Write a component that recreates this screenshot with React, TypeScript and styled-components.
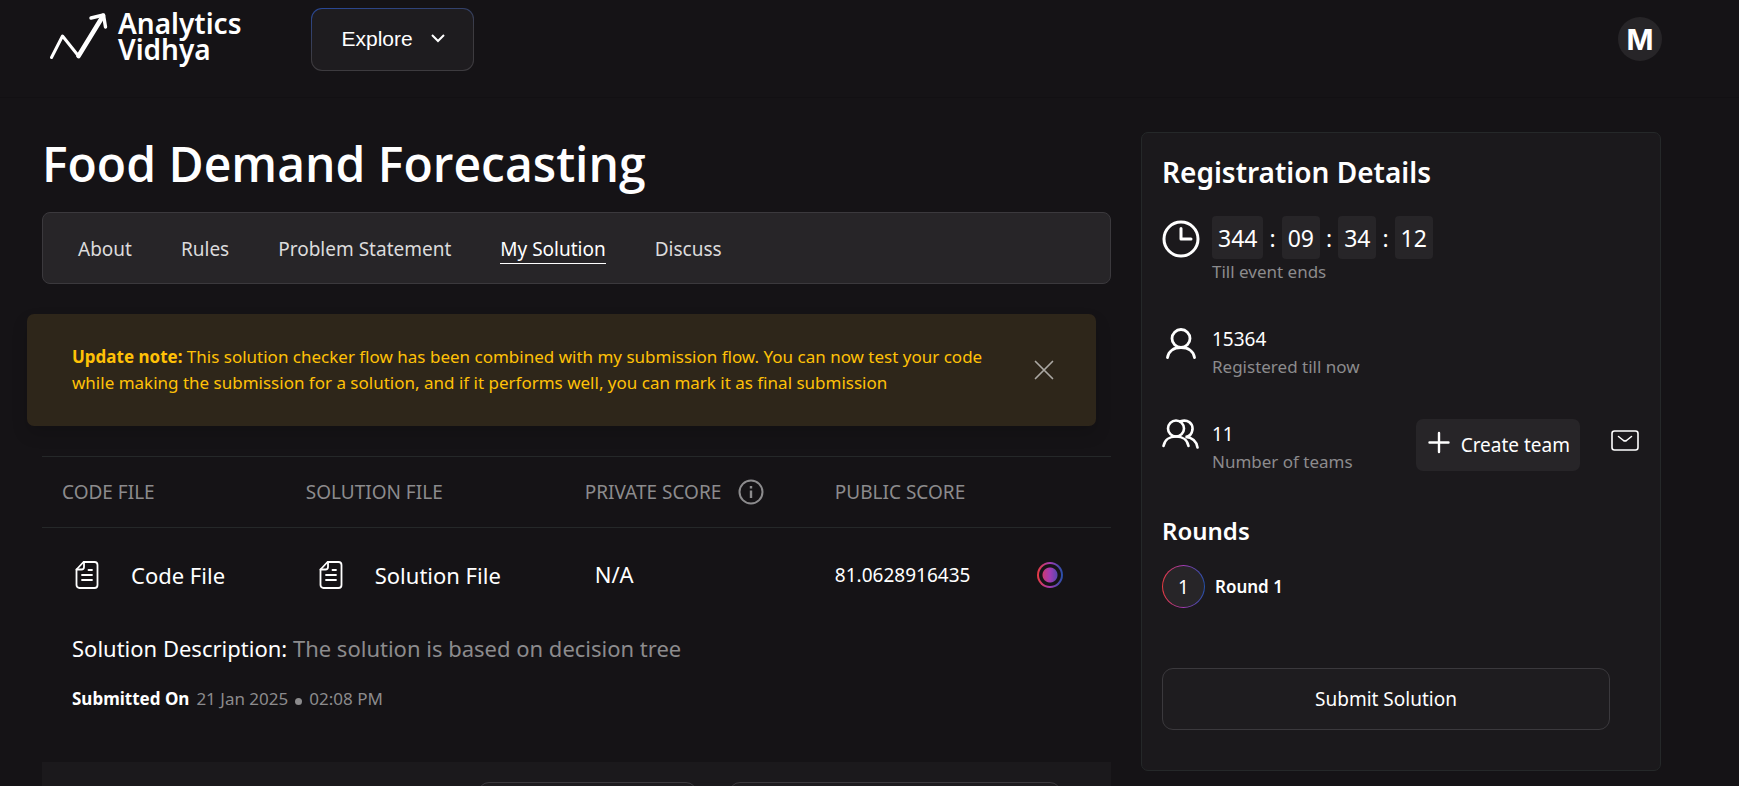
import React from "react";
import styled, { createGlobalStyle, css } from "styled-components";

const GlobalStyle = createGlobalStyle`
  *, *::before, *::after { box-sizing: border-box; }
  html { background: #151316; }
  body {
    margin: 0;
    background: #151316;
    color: #fff;
    font-family: "Noto Sans", "Open Sans", sans-serif;
    font-size: 18px;
    line-height: 26px;
  }
  h1, h2, h3, p { margin: 0; }
  button { font: inherit; color: inherit; cursor: pointer; }
  a { color: inherit; text-decoration: none; }
  svg { display: block; flex: none; }
`;

const muted = "#8c8b8d";
const panel = "#1b191c";
const raised = "#272528";
const hairline = "#252829";

const Page = styled.div`
  height: 100vh;
  overflow: hidden;
`;

const Header = styled.header`
  display: flex;
  align-items: flex-start;
  padding: 8px 77px 26px 50px;
  border-bottom: 1px solid #121013;
`;

const Logo = styled.a`
  display: flex;
  align-items: flex-start;
  gap: 9px;
  margin: 2px 70px 0 0;
`;

const LogoText = styled.span`
  font-size: 28px;
  font-weight: 600;
  line-height: 26px;
`;

const LogoLine = styled.span`
  display: block;
`;

const ExploreButton = styled.button`
  display: flex;
  align-items: center;
  gap: 18px;
  height: 63px;
  padding: 0 28px 2px 29px;
  border: 1px solid transparent;
  border-radius: 11px;
  background:
    linear-gradient(#1e1c1f, #1e1c1f) padding-box,
    linear-gradient(170deg, #28489a, #3d3b3f 55%) border-box;
  font-family: "Liberation Sans", Arial, sans-serif;
  font-size: 21px;
`;

const Avatar = styled.button`
  width: 44px;
  height: 44px;
  margin: 9px 0 0 auto;
  padding: 2px 0 0;
  border: 0;
  border-radius: 50%;
  background: ${raised};
  font-family: Inter, "Liberation Sans", sans-serif;
  font-size: 29px;
  font-weight: 700;
`;

const Main = styled.main`
  display: flex;
  align-items: flex-start;
  gap: 30px;
  padding: 34px 78px 0 42px;
`;

const Content = styled.div`
  flex: 1;
  min-width: 0;
`;

const Title = styled.h1`
  margin-bottom: 16px;
  font-family: "Open Sans", "Noto Sans", sans-serif;
  font-size: 48px;
  font-weight: 600;
  line-height: 64px;
`;

const Tabs = styled.nav`
  display: flex;
  align-items: center;
  gap: 49px;
  height: 72px;
  margin-bottom: 30px;
  padding: 2px 35px 0;
  border: 1px solid #3b393d;
  border-radius: 8px;
  background: ${raised};
`;

const Tab = styled.a<{ $active?: boolean }>`
  border-bottom: 1px solid ${(p) => (p.$active ? "#fff" : "transparent")};
  color: ${(p) => (p.$active ? "#fff" : "#dcdbdc")};
  font-size: 19px;
  line-height: 28px;
`;

const Notice = styled.aside`
  display: flex;
  align-items: center;
  justify-content: space-between;
  gap: 30px;
  height: 112px;
  margin: 0 15px 30px -15px;
  padding: 0 42px 0 45px;
  border-radius: 7px;
  background: #2e261a;
  box-shadow: 0 8px 16px rgba(0, 0, 0, 0.15);
  color: #ffc107;
  font-size: 17px;
`;

const CloseButton = styled.button`
  padding: 0;
  border: 0;
  background: none;
  color: #aba8a3;
`;

const Table = styled.table`
  width: 100%;
  border-collapse: separate;
  border-spacing: 0;
  table-layout: fixed;
`;

const HeadCell = styled.th<{ $width: string }>`
  width: ${(p) => p.$width};
  height: 72px;
  padding: 0 0 0 20px;
  border: solid ${hairline};
  border-width: 1px 0;
  color: ${muted};
  font-weight: 400;
  font-size: 19px;
  text-align: left;
  white-space: nowrap;
`;

const HeadLabel = styled.span`
  display: flex;
  align-items: center;
  gap: 17px;
`;

const Cell = styled.td<{ $indent: number }>`
  height: 94px;
  padding: 0 0 0 ${(p) => p.$indent}px;
  font-size: 19px;
  white-space: nowrap;
`;

const FileLink = styled.a`
  display: flex;
  align-items: center;
  gap: 32px;
  font-size: 22px;
`;

const LargeText = styled.span`
  font-size: 22px;
`;

const FinalRadio = styled.input`
  display: block;
  appearance: none;
  width: 26px;
  height: 26px;
  margin: 0;
  border: 2px solid transparent;
  border-radius: 50%;
  background:
    radial-gradient(circle, transparent 7px, #151316 8px) padding-box,
    linear-gradient(90deg, #e83a3f, #a23bb4 50%, #2350a8) border-box;
`;

const DetailCell = styled.td`
  padding: 10px 0 50px 30px;
`;

const Description = styled.p`
  margin-bottom: 22px;
  font-size: 22px;
  line-height: 32px;
`;

const Submitted = styled.p`
  display: flex;
  align-items: center;
  gap: 7px;
  font-size: 17px;
`;

const Muted = styled.span`
  color: ${muted};
`;

const Dot = styled.span`
  width: 7px;
  height: 7px;
  margin-top: 4px;
  border-radius: 50%;
  background: ${muted};
`;

const FooterBar = styled.div`
  display: flex;
  justify-content: flex-end;
  gap: 32px;
  padding: 20px 50px;
  background: ${panel};
`;

const outlined = css`
  border: 1px solid #3b393d;
  border-radius: 11px;
  background: #1e1c1f;
`;

const FooterButton = styled.button<{ $width: number }>`
  ${outlined}
  width: ${(p) => p.$width}px;
  height: 62px;
`;

const Card = styled.aside`
  flex: none;
  width: 520px;
  padding: 19px 21px 40px 20px;
  border: 1px solid ${hairline};
  border-radius: 7px;
  background: ${panel};
`;

const CardTitle = styled.h2`
  margin-bottom: 24px;
  font-size: 28px;
  font-weight: 600;
  line-height: 40px;
`;

const Stat = styled.section`
  display: flex;
  align-items: flex-start;
  margin-bottom: 39px;
`;

const StatIcon = styled.span<{ $top: number }>`
  display: flex;
  justify-content: center;
  width: 38px;
  margin-right: 12px;
  padding-top: ${(p) => p.$top}px;
`;

const StatValue = styled.strong`
  display: block;
  font-size: 19px;
  font-weight: 400;
  line-height: 30px;
`;

const StatLabel = styled.span`
  display: block;
  color: ${muted};
  font-size: 17px;
`;

const Timer = styled.div`
  display: flex;
  align-items: center;
  gap: 6px;
  font-size: 23px;
`;

const TimerUnit = styled.span`
  display: flex;
  align-items: center;
  justify-content: center;
  height: 43px;
  padding: 0 6px;
  border-radius: 4px;
  background: ${raised};
`;

const TeamActions = styled.div`
  display: flex;
  align-items: center;
  gap: 31px;
  margin-left: auto;
`;

const CreateButton = styled.button`
  display: flex;
  align-items: center;
  gap: 11px;
  height: 52px;
  padding: 0 10px 0 12px;
  border: 0;
  border-radius: 7px;
  background: ${raised};
  font-size: 19px;
`;

const MailButton = styled.button`
  padding: 0;
  border: 0;
  background: none;
`;

const RoundsTitle = styled.h3`
  margin-bottom: 17px;
  font-size: 24px;
  font-weight: 600;
  line-height: 34px;
`;

const Round = styled.div`
  display: flex;
  align-items: center;
  gap: 10px;
  margin-bottom: 60px;
  font-weight: 600;
  font-size: 17px;
`;

const RoundNumber = styled.span`
  display: flex;
  align-items: center;
  justify-content: center;
  width: 43px;
  height: 43px;
  border: 1px solid transparent;
  border-radius: 50%;
  background:
    linear-gradient(${raised}, ${raised}) padding-box,
    linear-gradient(90deg, #e83a3f, #a23bb4 50%, #2350a8) border-box;
  font-size: 19px;
  font-weight: 400;
`;

const SubmitButton = styled.button`
  ${outlined}
  width: calc(100% - 29px);
  height: 62px;
  font-size: 19px;
`;

const LogoMark = () => (
  <svg width="59" height="50" viewBox="0 0 59 50" fill="none" stroke="#fff" strokeLinejoin="round" strokeLinecap="round" aria-hidden="true">
    <path d="M1.5 47.500L12.500 26L28.500 46" strokeWidth="3" />
    <path d="M28.500 46L53 6" strokeWidth="4.600" />
    <path d="M41 8L53.500 5L55.500 17" strokeWidth="3.400" />
  </svg>
);

const ChevronIcon = () => (
  <svg width="14" height="9" viewBox="0 0 14 9" fill="none" stroke="#fff" strokeWidth="2" aria-hidden="true">
    <path d="M1 1L7 7L13 1" />
  </svg>
);

const CloseIcon = () => (
  <svg width="20" height="20" viewBox="0 0 20 20" stroke="currentColor" strokeWidth="1.700" strokeLinecap="round" aria-hidden="true">
    <path d="M1.500 1.500L18.500 18.500M18.500 1.500L1.500 18.500" />
  </svg>
);

const InfoIcon = () => (
  <svg width="26" height="26" viewBox="0 0 26 26" fill="none" stroke={muted} strokeWidth="2" aria-hidden="true">
    <circle cx="13" cy="13" r="11.500" />
    <path d="M13 11.500V19M13 7V9.500" strokeWidth="2.400" />
  </svg>
);

const FileIcon = () => (
  <svg width="24" height="28" viewBox="0 0 24 28" fill="none" stroke="#fff" strokeWidth="1.800" strokeLinejoin="round" strokeLinecap="round" aria-hidden="true">
    <path d="M8.500 1H19.500A3 3 0 0 1 22.500 4V24A3 3 0 0 1 19.500 27H4.500A3 3 0 0 1 1.500 24V8.500Z" />
    <path d="M9 1V6A2.500 2.500 0 0 1 6.500 8.500H1.500M13.500 9H17M7 14H17M7 19H17" />
  </svg>
);

const ClockIcon = () => (
  <svg width="38" height="38" viewBox="0 0 38 38" fill="none" stroke="#fff" strokeWidth="3" strokeLinecap="round" strokeLinejoin="round" aria-hidden="true">
    <circle cx="19" cy="19" r="17" />
    <path d="M19 8.500V19H29" />
  </svg>
);

const UserIcon = () => (
  <svg width="30" height="31" viewBox="0 0 30 31" fill="none" stroke="#fff" strokeWidth="2.800" strokeLinecap="round" aria-hidden="true">
    <circle cx="15" cy="10.500" r="9" />
    <path d="M1.500 29.500C2.500 23 8 19.500 15 19.500S27.500 23 28.500 29.500" />
  </svg>
);

const TeamIcon = () => (
  <svg width="38" height="30" viewBox="0 0 38 30" fill="none" stroke="#fff" strokeWidth="2.600" strokeLinecap="round" aria-hidden="true">
    <circle cx="14" cy="9.500" r="8" />
    <path d="M1.500 27C2.500 21 7.500 17.500 14 17.500S25.500 21 26.500 27" />
    <path d="M18.500 2.300C25.500 0 31 4 30.500 10.500C30 14.500 27.500 17.500 23.500 18C30.500 18.500 34.500 22.500 35.500 28.500" />
  </svg>
);

const PlusIcon = () => (
  <svg width="22" height="28" viewBox="0 0 22 28" stroke="#fff" strokeWidth="2.400" strokeLinecap="round" aria-hidden="true">
    <path d="M11 2V21M1.500 11.500H20.500" />
  </svg>
);

const MailIcon = () => (
  <svg width="28" height="30" viewBox="0 0 28 30" fill="none" stroke="#fff" strokeWidth="1.600" strokeLinecap="round" strokeLinejoin="round" aria-hidden="true">
    <rect x="1" y="1" width="26" height="19" rx="2.500" />
    <path d="M7.500 6.500L12.500 10.500Q14 11.600 15.500 10.500L20.500 6.500" />
  </svg>
);

const tabs = ["About", "Rules", "Problem Statement", "My Solution", "Discuss"];
const countdown = ["344", "09", "34", "12"];

export default function App() {
  return (
    <Page>
      <GlobalStyle />
      <Header>
        <Logo href="#home">
          <LogoMark />
          <LogoText>
            <LogoLine>Analytics</LogoLine>
            <LogoLine>Vidhya</LogoLine>
          </LogoText>
        </Logo>
        <ExploreButton>
          Explore
          <ChevronIcon />
        </ExploreButton>
        <Avatar aria-label="Account">M</Avatar>
      </Header>

      <Main>
        <Content>
          <Title>Food Demand Forecasting</Title>
          <Tabs>
            {tabs.map((name) => (
              <Tab key={name} href={"#" + name.toLowerCase().replace(" ", "-")} $active={name === "My Solution"}>
                {name}
              </Tab>
            ))}
          </Tabs>
          <Notice>
            <p>
              <b>Update note:</b> This solution checker flow has been combined with my submission flow. You can now
              test your code while making the submission for a solution, and if it performs well, you can mark it as
              final submission
            </p>
            <CloseButton aria-label="Close note">
              <CloseIcon />
            </CloseButton>
          </Notice>
          <Table>
            <thead>
              <tr>
                <HeadCell $width="22.8%">CODE FILE</HeadCell>
                <HeadCell $width="26.1%">SOLUTION FILE</HeadCell>
                <HeadCell $width="23.4%">
                  <HeadLabel>
                    PRIVATE SCORE
                    <InfoIcon />
                  </HeadLabel>
                </HeadCell>
                <HeadCell $width="18.9%">PUBLIC SCORE</HeadCell>
                <HeadCell $width="8.8%" aria-label="Final submission" />
              </tr>
            </thead>
            <tbody>
              <tr>
                <Cell $indent={33}>
                  <FileLink href="#code-file">
                    <FileIcon />
                    Code File
                  </FileLink>
                </Cell>
                <Cell $indent={33}>
                  <FileLink href="#solution-file">
                    <FileIcon />
                    Solution File
                  </FileLink>
                </Cell>
                <Cell $indent={30}>
                  <LargeText>N/A</LargeText>
                </Cell>
                <Cell $indent={20}>81.0628916435</Cell>
                <Cell $indent={20}>
                  <FinalRadio type="radio" name="final" defaultChecked aria-label="Mark as final submission" />
                </Cell>
              </tr>
              <tr>
                <DetailCell colSpan={5}>
                  <Description>
                    Solution Description: <Muted>The solution is based on decision tree</Muted>
                  </Description>
                  <Submitted>
                    <b>Submitted On</b>
                    <Muted>21 Jan 2025</Muted>
                    <Dot />
                    <Muted>02:08 PM</Muted>
                  </Submitted>
                </DetailCell>
              </tr>
            </tbody>
          </Table>
          <FooterBar>
            <FooterButton $width={219} aria-label="Previous submissions" />
            <FooterButton $width={332} aria-label="Confirm final submission" />
          </FooterBar>
        </Content>

        <Card>
          <CardTitle>Registration Details</CardTitle>
          <Stat>
            <StatIcon $top={4}>
              <ClockIcon />
            </StatIcon>
            <div>
              <Timer>
                {countdown.map((value, i) => (
                  <React.Fragment key={i}>
                    {i > 0 && <span>:</span>}
                    <TimerUnit>{value}</TimerUnit>
                  </React.Fragment>
                ))}
              </Timer>
              <StatLabel>Till event ends</StatLabel>
            </div>
          </Stat>
          <Stat>
            <StatIcon $top={4}>
              <UserIcon />
            </StatIcon>
            <div>
              <StatValue>15364</StatValue>
              <StatLabel>Registered till now</StatLabel>
            </div>
          </Stat>
          <Stat>
            <StatIcon $top={0}>
              <TeamIcon />
            </StatIcon>
            <div>
              <StatValue>11</StatValue>
              <StatLabel>Number of teams</StatLabel>
            </div>
            <TeamActions>
              <CreateButton>
                <PlusIcon />
                Create team
              </CreateButton>
              <MailButton aria-label="Invitations">
                <MailIcon />
              </MailButton>
            </TeamActions>
          </Stat>
          <RoundsTitle>Rounds</RoundsTitle>
          <Round>
            <RoundNumber>1</RoundNumber>
            Round 1
          </Round>
          <SubmitButton>Submit Solution</SubmitButton>
        </Card>
      </Main>
    </Page>
  );
}
